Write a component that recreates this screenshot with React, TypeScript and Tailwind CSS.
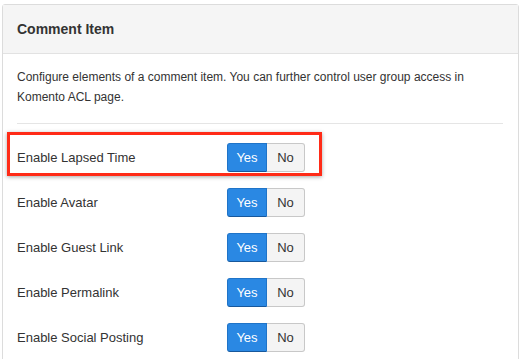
import React from 'react';

interface ToggleRowProps {
  label: string;
  highlighted?: boolean;
}

const ToggleRow: React.FC<ToggleRowProps> = ({ label, highlighted }) => {
  return (
    <div className="relative flex items-center h-[45px]">
      {/* Label */}
      <div className="w-[210px] text-[13px] text-[#333]">{label}</div>

      {/* Yes / No switch */}
      <div className="flex h-[29px] text-[13px]">
        <div className="w-[40px] flex items-center justify-center bg-[#2a88e3] text-white rounded-l-[3px] border border-[#1f74c8] border-b-[#17589c]">
          Yes
        </div>
        <div className="w-[38px] flex items-center justify-center bg-[#f4f4f4] text-[#333] rounded-r-[3px] border border-l-0 border-[#c8c8c8]">
          No
        </div>
      </div>

      {/* Highlight box */}
      {highlighted && (
        <div className="absolute left-[-10px] top-[-3px] w-[315px] h-[44px] border-[3px] border-[#ff2b17] shadow-[0_1px_4px_rgba(0,0,0,0.35)] pointer-events-none" />
      )}
    </div>
  );
};

export default function App() {
  const rows = [
    'Enable Lapsed Time',
    'Enable Avatar',
    'Enable Guest Link',
    'Enable Permalink',
    'Enable Social Posting',
  ];

  return (
    <div
      className="w-[521px] h-[359px] overflow-hidden bg-white pt-[4px] pl-[2px] pr-[2px]"
      style={{ fontFamily: '"Liberation Sans", Arial, sans-serif' }}
    >
      <div className="border border-[#dcdcdc] rounded-t-[3px] h-[400px]">
        {/* Header */}
        <div className="h-[49px] bg-[#f5f5f5] border-b border-[#e2e2e2] flex items-center px-[14px]">
          <h2 className="text-[14px] font-bold text-[#333]">Comment Item</h2>
        </div>

        {/* Body */}
        <div className="px-[14px] pt-[13px]">
          <p className="text-[12px] leading-[20px] text-[#333]">
            Configure elements of a comment item. You can further control user group access in
            Komento ACL page.
          </p>
          <div className="mt-[16px] mb-[11px] h-px bg-[#e5e5e5] mr-[1px]" />

          {rows.map((label, i) => (
            <ToggleRow key={label} label={label} highlighted={i === 0} />
          ))}
        </div>
      </div>
    </div>
  );
}
